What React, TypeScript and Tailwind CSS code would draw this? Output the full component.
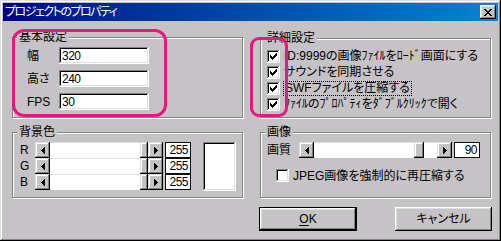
import type { ReactNode } from "react";

const FONT = "font-['Liberation_Sans','Noto_Sans_CJK_JP',sans-serif] [font-feature-settings:'palt']";
const RAISED =
  "shadow-[inset_-1px_-1px_#000,inset_1px_1px_#dedfde,inset_-2px_-2px_#848284,inset_2px_2px_#fff]";
const BUTTON =
  "shadow-[inset_-1px_-1px_#000,inset_1px_1px_#fff,inset_-2px_-2px_#848284,inset_2px_2px_#dedfde]";
const SUNKEN =
  "shadow-[inset_-1px_-1px_#fff,inset_1px_1px_#848284,inset_-2px_-2px_#dedfde,inset_2px_2px_#000]";

// win98 checkmark, one 3px column per x
const CHECK_COLS: [number, number][] = [
  [3, 5],
  [4, 6],
  [5, 7],
  [6, 6],
  [7, 5],
  [8, 4],
  [9, 3],
];

function CheckBox({ checked }: { checked: boolean }) {
  return (
    <span className={`flex h-[13px] w-[13px] shrink-0 bg-white ${SUNKEN}`}>
      {checked && (
        <svg width="13" height="13" viewBox="0 0 13 13" shapeRendering="crispEdges">
          {CHECK_COLS.map(([x, y]) => (
            <rect key={x} x={x} y={y} width="1" height="3" fill="#000" />
          ))}
        </svg>
      )}
    </span>
  );
}

function Arrow({ dir }: { dir: "left" | "right" }) {
  return (
    <span className={`flex h-[16px] w-[15px] shrink-0 items-center justify-center bg-[#c6c3c6] ${RAISED}`}>
      <svg width="4" height="7" viewBox="0 0 4 7" shapeRendering="crispEdges">
        <polygon points={dir === "left" ? "4,0 4,7 0,3.5" : "0,0 0,7 4,3.5"} fill="#000" />
      </svg>
    </span>
  );
}

function ScrollBar({ pos, thumb, className }: { pos: number; thumb: string; className: string }) {
  return (
    <div className={`flex h-[16px] shrink-0 ${className}`}>
      <Arrow dir="left" />
      <div className="flex flex-1 bg-white shadow-[inset_0_1px_#dedfde]">
        <div className="basis-0" style={{ flexGrow: pos }} />
        <div className={`h-full shrink-0 bg-[#c6c3c6] ${RAISED} ${thumb}`} />
        <div className="basis-0" style={{ flexGrow: 1 - pos }} />
      </div>
      <Arrow dir="right" />
    </div>
  );
}

function ValueBox({ value }: { value: string }) {
  return (
    <div className="ml-[2px] flex h-[16px] w-[26px] shrink-0 items-center justify-end border border-[#101010] bg-white pr-[2px] text-[12px] leading-none tracking-[-0.5px]">
      {value}
    </div>
  );
}

function Group({ title, className, children }: { title: string; className: string; children: ReactNode }) {
  return (
    <div className={`relative border border-[#848284] shadow-[inset_1px_1px_#fff,1px_1px_#fff] ${className}`}>
      <span className="absolute -top-[8px] left-[4px] bg-[#c6c3c6] px-[2px] text-[12px] leading-[14px]">
        {title}
      </span>
      {children}
    </div>
  );
}

function TextRow({ label, value }: { label: string; value: string }) {
  return (
    <div className="flex items-center">
      <span className="w-[32px] text-[12px] leading-none">{label}</span>
      <div className={`flex h-[17px] w-[90px] items-center bg-white px-[3px] text-[12px] tracking-[-0.5px] ${SUNKEN}`}>
        {value}
      </div>
    </div>
  );
}

const OPTIONS = [
  { text: "ID:9999の画像ﾌｧｲﾙをﾛｰﾄﾞ画面にする", focus: false },
  { text: "サウンドを同期させる", focus: false },
  { text: "SWFファイルを圧縮する", focus: true },
  { text: "ﾌｧｲﾙのﾌﾟﾛﾊﾟﾃｨをﾀﾞﾌﾞﾙｸﾘｯｸで開く", focus: false },
];

export default function App() {
  return (
    <div
      className={`relative flex h-[241px] w-[501px] flex-col bg-[#c6c3c6] p-[3px] text-black ${FONT} shadow-[inset_-1px_-1px_#000,inset_1px_1px_#dedfde,inset_-2px_-2px_#848284,inset_2px_2px_#fff]`}
    >
      {/* title bar */}
      <div className="flex h-[18px] shrink-0 items-center bg-gradient-to-r from-[#000084] to-[#1084d0] pl-[2px] pr-[2px]">
        <span className="flex-1 text-[12px] leading-none tracking-[-1.5px] text-white">プロジェクトのプロパティ</span>
        <span className={`flex h-[14px] w-[16px] items-center justify-center bg-[#c6c3c6] ${BUTTON}`}>
          <svg width="8" height="7" viewBox="0 0 8 7" shapeRendering="crispEdges">
            <path d="M0 0h2v1h1v1h2V1h1V0h2v1H7v1H6v1H5v1h1v1h1v1h1v1H6V6H5V5H3v1H2v1H0V6h1V5h1V4h1V3H2V2H1V1H0z" fill="#000" />
          </svg>
        </span>
      </div>

      <div className="flex flex-1 pl-[9px] pr-[7px]">
        {/* left column */}
        <div className="flex w-[231px] flex-col">
          <Group title="基本設定" className="mt-[16px] h-[81px] pl-[14px] pt-[9px]">
            <div className="flex flex-col gap-[6px]">
              <TextRow label="幅" value="320" />
              <TextRow label="高さ" value="240" />
              <TextRow label="FPS" value="30" />
            </div>
          </Group>

          <Group title="背景色" className="mt-[14px] flex h-[66px] pl-[7px] pt-[9px]">
            <div className="flex flex-col">
              {["R", "G", "B"].map((c) => (
                <div key={c} className="flex h-[16px] items-center">
                  <span className="w-[15px] text-[12px] leading-none">{c}</span>
                  <ScrollBar pos={1} thumb="w-[8px]" className="w-[128px]" />
                  <ValueBox value="255" />
                </div>
              ))}
            </div>
            <div className={`ml-[12px] h-[49px] w-[33px] bg-white ${SUNKEN}`} />
          </Group>
        </div>

        {/* right column */}
        <div className="ml-[17px] flex flex-1 flex-col">
          <Group title="詳細設定" className="mt-[17px] h-[80px] pl-[6px] pt-[9px]">
            <div className="flex flex-col">
              {OPTIONS.map((o) => (
                <div key={o.text} className="flex h-[16px] items-center gap-[3px]">
                  <CheckBox checked />
                  <span
                    className={`whitespace-nowrap text-[12px] leading-[13px] ${o.focus ? "border border-dotted border-black px-[1px]" : "px-[1px]"}`}
                  >
                    {o.text}
                  </span>
                </div>
              ))}
            </div>
          </Group>

          <Group title="画像" className="mt-[14px] h-[66px] pl-[6px] pt-[9px]">
            <div className="flex h-[16px] items-center">
              <span className="w-[32px] text-[12px] leading-none">画質</span>
              <ScrollBar pos={0.885} thumb="w-[10px]" className="w-[153px]" />
              <ValueBox value="90" />
            </div>
            <div className="ml-[9px] mt-[11px] flex items-center gap-[4px]">
              <CheckBox checked={false} />
              <span className="text-[12px] leading-none">JPEG画像を強制的に再圧縮する</span>
            </div>
          </Group>

          <div className="-mx-[1px] mt-[9px] flex justify-between">
            <button className="h-[24px] w-[98px] border border-black bg-[#c6c3c6] p-0">
              <span className={`flex h-full w-full items-center justify-center text-[12px] ${BUTTON}`}>
                <span className="underline underline-offset-2">O</span>K
              </span>
            </button>
            <button
              className={`flex h-[24px] w-[97px] items-center justify-center bg-[#c6c3c6] text-[12px] ${BUTTON}`}
            >
              キャンセル
            </button>
          </div>
        </div>
      </div>

      {/* pink annotation marks */}
      <div className="pointer-events-none absolute left-[12px] top-[29px] h-[88px] w-[155px] rounded-[12px] border-[3px] border-[#e6177e]" />
      <div className="pointer-events-none absolute left-[250px] top-[37px] h-[80px] w-[38px] rounded-[9px] border-[3px] border-[#e6177e]" />
    </div>
  );
}
